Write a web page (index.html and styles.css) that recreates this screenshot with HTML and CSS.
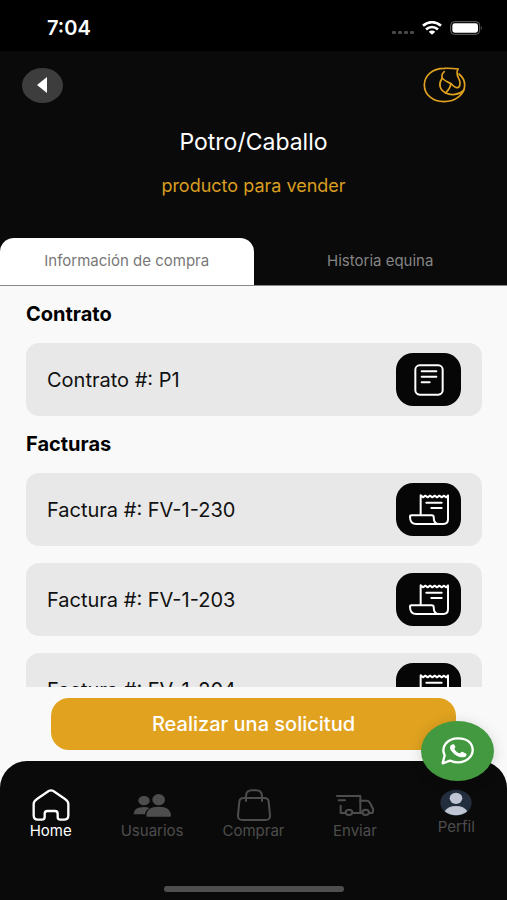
FILE: index.html
```
<!DOCTYPE html>
<html lang="es">
<head>
  <meta charset="UTF-8">
  <meta name="viewport" content="width=device-width, initial-scale=1">
  <title>Potro/Caballo</title>
  <link rel="stylesheet" href="styles.css">
</head>
<body>

  <!-- Icons used more than once -->
  <svg class="sprite" aria-hidden="true">
    <symbol id="icon-factura" viewBox="0 0 120 96">
      <g fill="none" stroke="#fff" stroke-width="6" stroke-linejoin="round" stroke-linecap="round">
        <path d="M35 64V4l7 6 7-5 7 5 7-5 7 5 7-5 7 5 7-5 7 5 7-5 6 5 6-6V76q0 14-14 14H22Q3 90 3 68q0-4 5-4H68q6 0 6 5 0 21 16 21"/>
        <path d="M52 26h46M67 42h31"/>
      </g>
    </symbol>
  </svg>

  <!-- Status bar -->
  <div class="status-bar">
    <span class="status-time">7:04</span>
    <div class="status-icons">
      <svg width="22" height="4" viewBox="0 0 22 4" fill="#4a4a4a">
        <rect x="0" y="0" width="4" height="3" rx="1"/><rect x="6" y="0" width="4" height="3" rx="1"/>
        <rect x="12" y="0" width="4" height="3" rx="1"/><rect x="18" y="0" width="4" height="3" rx="1"/>
      </svg>
      <svg width="20" height="14" viewBox="0 0 60 42">
        <g fill="none" stroke="#fff" stroke-width="8">
          <path d="M3 14Q30-7 57 14"/>
          <path d="M12 25Q30 11 48 25"/>
        </g>
        <path d="M20 32q10-7 20 0L30 41z" fill="#fff"/>
      </svg>
      <svg width="33" height="14" viewBox="0 0 99 42">
        <rect x="2" y="2" width="87" height="38" rx="11" fill="none" stroke="#666" stroke-width="3"/>
        <rect x="7" y="7" width="77" height="28" rx="7" fill="#fff"/>
        <path d="M93 15q5 6 0 12z" fill="#777"/>
      </svg>
    </div>
  </div>

  <!-- Header -->
  <header class="header">
    <div class="header-top">
      <button class="back-btn" aria-label="Volver">
        <svg width="10" height="16" viewBox="0 0 10 16"><path d="M10 0v16L0 8z" fill="#fff"/></svg>
      </button>
      <svg class="logo" width="44" height="36" viewBox="0 0 132 108">
        <g fill="none" stroke="#e0a21f" stroke-width="5" stroke-linecap="round" stroke-linejoin="round">
          <path d="M105 6Q84 3 63 4C29 4 4 25 4 54s25 50 59 50 62-21 62-50c0-13-6-24-17-33"/>
          <path d="M64 14C56 20 54 30 60 36C66 42 76 46 84 50C82 62 76 70 68 78C50 68 46 52 56 36"/>
          <path d="M105 6C100 16 102 24 106 32C114 46 112 60 104 62C96 64 90 56 84 50"/>
          <path d="M68 78C84 86 108 84 122 70"/>
        </g>
      </svg>
    </div>
    <h1 class="title">Potro/Caballo</h1>
    <p class="subtitle">producto para vender</p>
    <div class="tabs" role="tablist">
      <button class="tab active" role="tab" aria-selected="true">Información de compra</button>
      <button class="tab" role="tab" aria-selected="false">Historia equina</button>
    </div>
  </header>

  <!-- Documents -->
  <main class="content">
    <h2>Contrato</h2>
    <div class="card">
      <span>Contrato #: P1</span>
      <button class="doc-btn" aria-label="Ver contrato P1">
        <svg width="30" height="32" viewBox="0 0 90 96">
          <g fill="none" stroke="#fff" stroke-width="6" stroke-linecap="round">
            <rect x="4" y="4" width="82" height="88" rx="13"/>
            <path d="M23 22h44M23 38h44M23 55h24"/>
          </g>
        </svg>
      </button>
    </div>

    <h2>Facturas</h2>
    <div class="card">
      <span>Factura #: FV-1-230</span>
      <button class="doc-btn" aria-label="Ver factura FV-1-230"><svg width="40" height="32"><use href="#icon-factura"/></svg></button>
    </div>
    <div class="card">
      <span>Factura #: FV-1-203</span>
      <button class="doc-btn" aria-label="Ver factura FV-1-203"><svg width="40" height="32"><use href="#icon-factura"/></svg></button>
    </div>
    <div class="card">
      <span>Factura #: FV-1-204</span>
      <button class="doc-btn" aria-label="Ver factura FV-1-204"><svg width="40" height="32"><use href="#icon-factura"/></svg></button>
    </div>
  </main>

  <div class="footer">
    <div class="action">
      <button class="request-btn">Realizar una solicitud</button>
    </div>

    <a class="whatsapp" href="#" aria-label="WhatsApp">
      <svg width="33" height="28" viewBox="0 0 99 84">
        <path d="M5 79l6-24C-2 28 20 4 51 4s44 17 44 36-19 36-44 36q-13 0-24-5z" fill="none" stroke="#fff" stroke-width="7" stroke-linejoin="round"/>
        <path d="M36 22c-10 3-12 12-4 21 10 13 22 19 35 18 8-1 11-7 9-11l-12-6c-3-1-6 5-8 5-6-1-14-8-16-13 0-2 4-4 3-7l-4-7z" fill="#fff"/>
      </svg>
    </a>

    <nav class="nav">
      <a class="nav-item active" href="#">
        <svg width="38" height="32" viewBox="0 0 114 96">
          <path d="M16 29L50 6q7-4 14 0l34 23q11 7 11 16v34q0 13-13 13H85q-8 0-8-8V74q0-8-8-8H46q-8 0-8 8v10q0 8-8 8H18Q5 92 5 79V45q0-9 11-16z" fill="none" stroke="currentColor" stroke-width="7"/>
        </svg>
        Home
      </a>
      <a class="nav-item" href="#">
        <svg width="38" height="32" viewBox="0 0 114 96" fill="currentColor">
          <ellipse cx="33" cy="35" rx="17" ry="14"/>
          <ellipse cx="77" cy="32" rx="19" ry="17"/>
          <path d="M2 76q0-22 31-22 10 0 17 3Q38 63 36 76z"/>
          <path d="M40 81q0-28 37-28t37 28q0 2-4 2H44q-4 0-4-2z"/>
        </svg>
        Usuarios
      </a>
      <a class="nav-item" href="#">
        <svg width="38" height="32" viewBox="0 0 114 96">
          <g fill="none" stroke="currentColor" stroke-width="6" stroke-linecap="round">
            <path d="M26 27h62q12 0 13 11l4 41q1 14-14 14H23Q8 93 9 79l4-41q1-11 13-11z"/>
            <path d="M33 36V22Q33 4 51 4h12q18 0 18 18v14"/>
          </g>
        </svg>
        Comprar
      </a>
      <a class="nav-item" href="#">
        <svg width="38" height="32" viewBox="0 0 114 96">
          <g fill="none" stroke="currentColor" stroke-width="6" stroke-linecap="round" stroke-linejoin="round">
            <path d="M3 21h70v51H50M29 72H14V50M8 34h19"/>
            <path d="M73 35h20q6 0 9 7l9 18v8q0 4-6 4h-6M79 72h-6"/>
            <ellipse cx="39" cy="70" rx="10" ry="8"/>
            <ellipse cx="89" cy="70" rx="10" ry="8"/>
          </g>
        </svg>
        Enviar
      </a>
      <a class="nav-item profile" href="#">
        <svg width="32" height="27" viewBox="0 0 96 81">
          <ellipse cx="48" cy="41" rx="47" ry="39" fill="#222d3d"/>
          <ellipse cx="48" cy="28" rx="19" ry="17" fill="#bfc5d2"/>
          <path d="M14 67q10-16 34-16t34 16Q68 79 48 79T14 67z" fill="#bfc5d2"/>
        </svg>
        Perfil
      </a>
    </nav>
    <div class="home-bar"></div>
  </div>

</body>
</html>
```
FILE: styles.css
```
* { box-sizing: border-box; }

body {
  margin: 0;
  height: 100vh;
  display: flex;
  flex-direction: column;
  overflow: hidden;
  font-family: Inter, "Liberation Sans", sans-serif;
  background-color: #f9f9f9;
  color: #111;
}

h1, h2, p { margin: 0; }
a { text-decoration: none; }

button {
  font-family: inherit;
  border: none;
  padding: 0;
  cursor: pointer;
}

.sprite {
  position: absolute;
  width: 0;
  height: 0;
}

/* Status bar */
.status-bar {
  flex: none;
  display: flex;
  justify-content: space-between;
  align-items: center;
  height: 51px;
  padding: 4px 24px 0 47px;
  background-color: #000;
  color: #fff;
}
.status-time {
  font-size: 20px;
  font-weight: 600;
}
.status-icons {
  display: flex;
  align-items: center;
  gap: 8px;
}
.status-icons svg:first-child { margin-top: 10px; }

/* Header */
.header {
  flex: none;
  background-color: #0a0a0a;
  border-bottom: 1px solid #888;
  text-align: center;
}
.header-top {
  display: flex;
  justify-content: space-between;
  align-items: center;
  padding: 16px 40px 0 22px;
}
.back-btn {
  display: flex;
  align-items: center;
  justify-content: center;
  width: 41px;
  height: 35px;
  padding-right: 2px;
  border-radius: 50%;
  background-color: #3d3d3d;
}
.title {
  margin-top: 24px;
  font-size: 23px;
  font-weight: 400;
  line-height: 30px;
  color: #fff;
}
.subtitle {
  margin-top: 18px;
  font-size: 18px;
  line-height: 22px;
  color: #d99d20;
}
.tabs {
  display: flex;
  margin-top: 41px;
}
.tab {
  flex: 1;
  height: 47px;
  padding-bottom: 2px;
  font-size: 15px;
  background: none;
  color: #858585;
}
.tab.active {
  border-radius: 14px 14px 0 0;
  background-color: #fff;
  color: #777;
}

/* Documents */
.content {
  flex: 1;
  min-height: 0;
  overflow: hidden;
  padding: 17px 25px 0 26px;
}
h2 {
  font-size: 20px;
  font-weight: 700;
  line-height: 23px;
  color: #000;
}
.card {
  display: flex;
  justify-content: space-between;
  align-items: center;
  height: 73px;
  margin: 17px 0;
  padding: 0 21px;
  border-radius: 13px;
  background-color: #e8e8e8;
  font-size: 20px;
}
.doc-btn {
  display: flex;
  align-items: center;
  justify-content: center;
  width: 65px;
  height: 53px;
  border-radius: 17px;
  background-color: #060606;
}

/* Bottom area */
.footer {
  flex: none;
  position: relative;
}
.action {
  padding: 11px 10%;
}
.request-btn {
  display: block;
  width: 100%;
  height: 52px;
  border-radius: 18px;
  background-color: #e0a21f;
  color: #fff;
  font-size: 20px;
  font-weight: 500;
}
.whatsapp {
  position: absolute;
  top: 34px;
  right: 13px;
  display: flex;
  align-items: center;
  justify-content: center;
  width: 73px;
  height: 60px;
  border-radius: 50%;
  background-color: #43993f;
  box-shadow: 0 2px 14px rgba(0,0,0,0.15);
}
.nav {
  display: flex;
  height: 139px;
  padding-top: 28px;
  border-radius: 27px 27px 0 0;
  background-color: #0a0a0a;
}
.nav-item {
  flex: 1;
  display: flex;
  flex-direction: column;
  align-items: center;
  font-size: 15px;
  line-height: 20px;
  color: #4d4d4d;
}
.nav-item.active { color: #fff; }
.profile svg { margin-bottom: 1px; }
.home-bar {
  position: absolute;
  left: 50%;
  bottom: 8px;
  width: 180px;
  height: 6px;
  margin-left: -90px;
  border-radius: 3px;
  background-color: #4f4f4f;
}
```
